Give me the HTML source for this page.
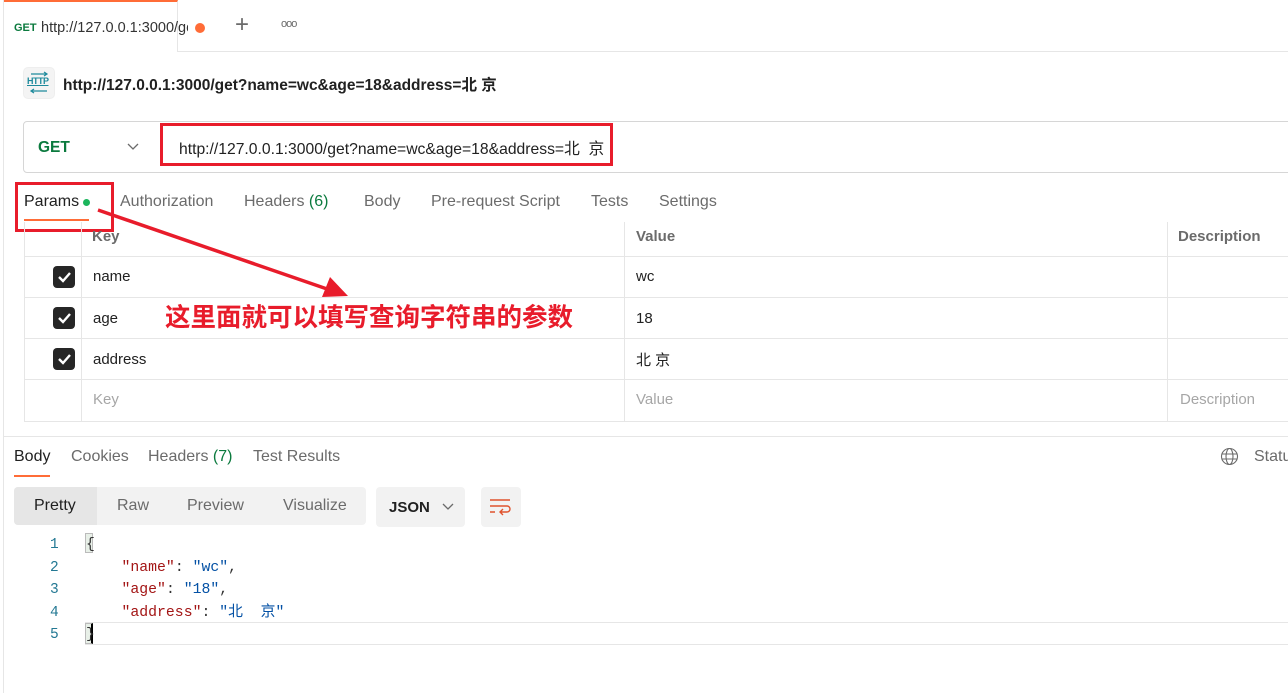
<!DOCTYPE html>
<html><head><meta charset="utf-8"><style>
*{box-sizing:border-box;margin:0;padding:0}
body{width:1288px;height:693px;overflow:hidden;background:#fff;font-family:"Liberation Sans","Noto Sans CJK SC",sans-serif;color:#212121;position:relative;font-size:15px}
.a{position:absolute;white-space:nowrap}
.mono{font-family:"Liberation Mono","Noto Sans CJK SC",monospace}
.t{font-size:16px}
</style></head><body>
<div class="a" style="left:3px;top:0;width:1px;height:693px;background:#e6e6e6"></div>
<div class="a" style="left:4px;top:51px;width:1284px;height:1px;background:#e6e6e6"></div>
<div class="a" style="left:4px;top:0;width:174px;height:52px;background:#fff;border-right:1px solid #e6e6e6;border-top:2px solid #ff6c37"></div>
<div class="a" style="left:14px;top:22px;font-size:11px;font-weight:bold;color:#0b7a3e">GET</div>
<div class="a" style="left:41px;top:20px;font-size:14.5px;width:147px;overflow:hidden;color:#333">http://127.0.0.1:3000/ge</div>
<div class="a" style="left:195px;top:23px;width:10px;height:10px;border-radius:50%;background:#ff6c37"></div>
<div class="a" style="left:235px;top:11px;font-size:24px;color:#6b6b6b;font-weight:300">+</div>
<div class="a" style="left:281px;top:18px;font-size:11px;color:#6b6b6b;letter-spacing:-1px">ooo</div>
<div class="a" style="left:23px;top:67px;width:32px;height:32px;border-radius:5px;background:#f4f4f4;border:1px solid #eee"></div>
<div class="a" style="left:27px;top:76px;font-size:9px;color:#1e8a9c;text-decoration:underline;font-weight:bold;letter-spacing:-0.5px">HTTP</div>
<svg class="a" style="left:27px;top:71px" width="24" height="24"><path d="M4 3h16M17 1l3 2-3 2M4 20h16M7 18l-3 2 3 2" stroke="#1e8a9c" stroke-width="1.2" fill="none"/></svg>
<div class="a" style="left:63px;top:73px;font-size:15.5px;font-weight:bold;color:#212121">http://127.0.0.1:3000/get?name=wc&amp;age=18&amp;address=北 京</div>
<div class="a" style="left:23px;top:121px;width:1280px;height:52px;border:1px solid #d6d6d6;border-radius:4px"></div>
<div class="a" style="left:38px;top:139px;font-size:15.5px;font-weight:bold;color:#0b7a3e">GET</div>
<svg class="a" style="left:127px;top:142px" width="12" height="10"><path d="M1 2l5 5 5-5" stroke="#6b6b6b" stroke-width="1.3" fill="none"/></svg>
<div class="a" style="left:160px;top:123px;width:453px;height:43px;border:3px solid #e81c2b"></div>
<div class="a" style="left:179px;top:136px;font-size:15.7px;color:#212121">http://127.0.0.1:3000/get?name=wc&amp;age=18&amp;address=北&nbsp; 京</div>
<div class="a t" style="left:24px;top:193px;color:#212121">Params</div>
<div class="a" style="left:83px;top:199px;width:7px;height:7px;border-radius:50%;background:#1bb55c"></div>
<div class="a" style="left:24px;top:219px;width:65px;height:2px;background:#ff6c37"></div>
<div class="a t" style="left:120px;top:193px;color:#6b6b6b">Authorization</div>
<div class="a t" style="left:244px;top:193px;color:#6b6b6b">Headers <span style="color:#0b7a3e">(6)</span></div>
<div class="a t" style="left:364px;top:193px;color:#6b6b6b">Body</div>
<div class="a t" style="left:431px;top:193px;color:#6b6b6b">Pre-request Script</div>
<div class="a t" style="left:591px;top:193px;color:#6b6b6b">Tests</div>
<div class="a t" style="left:659px;top:193px;color:#6b6b6b">Settings</div>
<div class="a" style="left:15px;top:182px;width:99px;height:50px;border:3px solid #e81c2b"></div>
<div class="a" style="left:24px;top:222px;width:1264px;height:200px;border-left:1px solid #e6e6e6;border-bottom:1px solid #e6e6e6"></div>
<div class="a" style="left:81px;top:222px;width:1px;height:199px;background:#e6e6e6"></div>
<div class="a" style="left:624px;top:222px;width:1px;height:199px;background:#e6e6e6"></div>
<div class="a" style="left:1167px;top:222px;width:1px;height:199px;background:#e6e6e6"></div>
<div class="a" style="left:24px;top:256px;width:1264px;height:1px;background:#e6e6e6"></div>
<div class="a" style="left:24px;top:297px;width:1264px;height:1px;background:#e6e6e6"></div>
<div class="a" style="left:24px;top:338px;width:1264px;height:1px;background:#e6e6e6"></div>
<div class="a" style="left:24px;top:379px;width:1264px;height:1px;background:#e6e6e6"></div>
<div class="a" style="left:92px;top:228px;font-weight:bold;color:#6b6b6b">Key</div>
<div class="a" style="left:636px;top:228px;font-weight:bold;color:#6b6b6b">Value</div>
<div class="a" style="left:1178px;top:228px;font-weight:bold;color:#6b6b6b">Description</div>
<div class="a" style="left:53px;top:266px;width:22px;height:22px;border-radius:4px;background:#262626"></div>
<div class="a" style="left:53px;top:307px;width:22px;height:22px;border-radius:4px;background:#262626"></div>
<div class="a" style="left:53px;top:348px;width:22px;height:22px;border-radius:4px;background:#262626"></div>
<svg class="a" style="left:53px;top:266px" width="22" height="104"><g stroke="#fff" stroke-width="2.4" fill="none"><path d="M6 11l4 4 7-8"/><path d="M6 52l4 4 7-8"/><path d="M6 93l4 4 7-8"/></g></svg>
<div class="a" style="left:93px;top:268px;color:#212121">name</div>
<div class="a" style="left:93px;top:310px;color:#212121">age</div>
<div class="a" style="left:93px;top:351px;color:#212121">address</div>
<div class="a" style="left:93px;top:391px;color:#a6a6a6">Key</div>
<div class="a" style="left:636px;top:268px;color:#212121">wc</div>
<div class="a" style="left:636px;top:310px;color:#212121">18</div>
<div class="a" style="left:636px;top:349px;color:#212121">北 京</div>
<div class="a" style="left:636px;top:391px;color:#a6a6a6">Value</div>
<div class="a" style="left:1180px;top:391px;color:#a6a6a6">Description</div>
<svg class="a" style="left:0;top:0" width="400" height="320"><line x1="98" y1="210" x2="330" y2="290" stroke="#e81c2b" stroke-width="3.5"/><path d="M348 296L322 297L330 277Z" fill="#e81c2b"/></svg>
<div class="a" style="left:165px;top:297px;font-size:25.5px;font-weight:bold;color:#e81c2b">这里面就可以填写查询字符串的参数</div>
<div class="a" style="left:4px;top:436px;width:1284px;height:1px;background:#e6e6e6"></div>
<div class="a t" style="left:14px;top:448px;color:#212121">Body</div>
<div class="a" style="left:14px;top:475px;width:36px;height:2px;background:#ff6c37"></div>
<div class="a t" style="left:71px;top:448px;color:#6b6b6b">Cookies</div>
<div class="a t" style="left:148px;top:448px;color:#6b6b6b">Headers <span style="color:#0b7a3e">(7)</span></div>
<div class="a t" style="left:253px;top:448px;color:#6b6b6b">Test Results</div>
<svg class="a" style="left:1220px;top:447px" width="19" height="19"><g stroke="#6b6b6b" stroke-width="1.1" fill="none"><circle cx="9.5" cy="9.5" r="8"/><ellipse cx="9.5" cy="9.5" rx="3.5" ry="8"/><path d="M2 7h15M2 12h15"/></g></svg>
<div class="a t" style="left:1254px;top:448px;color:#6b6b6b">Statu</div>
<div class="a" style="left:14px;top:487px;width:352px;height:38px;border-radius:4px;background:#f2f2f2"></div>
<div class="a" style="left:14px;top:487px;width:83px;height:38px;border-radius:4px 0 0 4px;background:#e6e6e6"></div>
<div class="a t" style="left:34px;top:497px;color:#212121">Pretty</div>
<div class="a t" style="left:117px;top:497px;color:#6b6b6b">Raw</div>
<div class="a t" style="left:187px;top:497px;color:#6b6b6b">Preview</div>
<div class="a t" style="left:283px;top:497px;color:#6b6b6b">Visualize</div>
<div class="a" style="left:376px;top:487px;width:89px;height:40px;border-radius:4px;background:#f2f2f2"></div>
<div class="a" style="left:389px;top:499px;font-size:15px;font-weight:bold;color:#212121">JSON</div>
<svg class="a" style="left:442px;top:502px" width="12" height="10"><path d="M1 2l5 5 5-5" stroke="#6b6b6b" stroke-width="1.3" fill="none"/></svg>
<div class="a" style="left:481px;top:487px;width:40px;height:40px;border-radius:4px;background:#f2f2f2"></div>
<svg class="a" style="left:488px;top:495px" width="26" height="24"><g stroke="#e0532d" stroke-width="1.4" fill="none"><path d="M2 5h20M2 11h17a3 3 0 010 6h-6M2 17h5M15 14l-3 3 3 3"/></g></svg>
<div class="a" style="left:85px;top:622px;width:1203px;height:1px;background:#e6e6e6"></div>
<div class="a" style="left:85px;top:644px;width:1203px;height:1px;background:#e6e6e6"></div>
<div class="a" style="left:85px;top:533px;width:8px;height:20px;background:#e8f0e8;border:1px solid #bbb"></div>
<div class="a" style="left:85px;top:623px;width:8px;height:21px;background:#e8f0e8;border:1px solid #bbb;border-right:2px solid #000"></div>
<div class="a mono" style="left:50px;top:534px;font-size:14.5px;color:#237893;line-height:22.5px;white-space:pre">1
2
3
4
5</div>
<div class="a mono" style="left:86px;top:534px;font-size:14.8px;line-height:22.5px;white-space:pre;color:#333">{
    <span style="color:#a31515">"name"</span>: <span style="color:#0451a5">"wc"</span>,
    <span style="color:#a31515">"age"</span>: <span style="color:#0451a5">"18"</span>,
    <span style="color:#a31515">"address"</span>: <span style="color:#0451a5">"北  京"</span>
}</div>
</body></html>
